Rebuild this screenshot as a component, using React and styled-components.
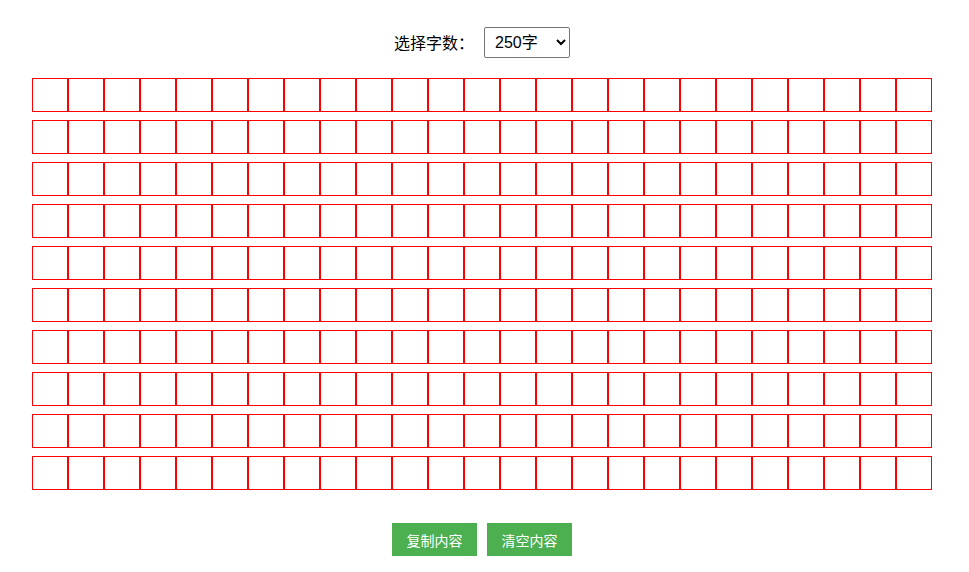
import { useState } from 'react';
import styled, { createGlobalStyle } from 'styled-components';

const GlobalStyle = createGlobalStyle`
  body {
    margin: 0;
    background: #fff;
    font-family: "Noto Sans CJK SC", "Noto Sans", sans-serif;
    color: #000;
  }
`;

const Page = styled.div`
  width: 900px;
  padding: 27px 0 0 32px;
`;

const Toolbar = styled.div`
  display: flex;
  align-items: center;
  justify-content: center;
  gap: 10px;
  height: 31px;
  margin-bottom: 20px;
`;

const Label = styled.label`
  font-size: 16px;
  line-height: 31px;
`;

const CountSelect = styled.select`
  width: 86px;
  height: 31px;
  font-size: 16px;
  font-family: "Liberation Sans", "Noto Sans CJK SC", sans-serif;
  padding: 0 4px 0 6px;
  border: 1px solid #767676;
  border-radius: 2px;
  background: #fff;
  color: #000;
`;

const Grid = styled.div`
  display: flex;
  flex-direction: column;
  gap: 8px;
`;

const Row = styled.div`
  display: flex;
`;

const Cell = styled.div`
  box-sizing: border-box;
  width: 36px;
  height: 34px;
  border: 1px solid #f00;
`;

const Actions = styled.div`
  display: flex;
  justify-content: center;
  gap: 10px;
  margin-top: 33px;
`;

const ActionButton = styled.button`
  width: 85px;
  height: 33px;
  padding: 0;
  border: none;
  background: #4caf50;
  color: #fff;
  font-size: 14px;
  font-family: "Noto Sans CJK SC", "Noto Sans", sans-serif;
  cursor: pointer;
`;

const COLS = 25;

const App = () => {
  const [count, setCount] = useState(250);
  const rows = Math.ceil(count / COLS);

  return (
    <>
      <GlobalStyle />
      <Page>
        <Toolbar>
          <Label htmlFor="count">选择字数：</Label>
          <CountSelect id="count" value={count} onChange={(e) => setCount(Number(e.target.value))}>
            <option value={100}>100字</option>
            <option value={200}>200字</option>
            <option value={250}>250字</option>
            <option value={300}>300字</option>
            <option value={400}>400字</option>
            <option value={500}>500字</option>
          </CountSelect>
        </Toolbar>
        <Grid>
          {Array.from({ length: rows }, (_, r) => (
            <Row key={r}>
              {Array.from({ length: COLS }, (_, c) => (
                <Cell key={c} />
              ))}
            </Row>
          ))}
        </Grid>
        <Actions>
          <ActionButton>复制内容</ActionButton>
          <ActionButton>清空内容</ActionButton>
        </Actions>
      </Page>
    </>
  );
};

export default App;
